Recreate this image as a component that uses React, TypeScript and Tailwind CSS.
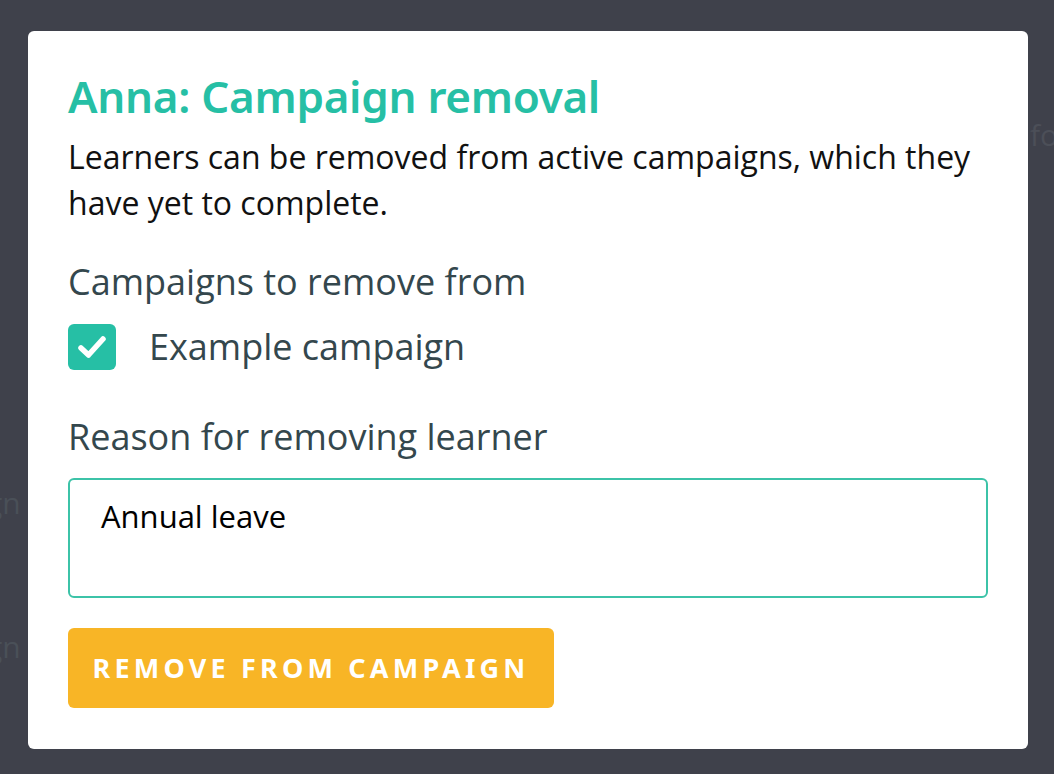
import React from "react";

export default function App() {
  return (
    <div className="relative w-[1054px] h-[774px] bg-[#3f414b] overflow-hidden" style={{ fontFamily: '"Open Sans", sans-serif' }}>
      <span className="absolute left-[1030px] top-[112px] text-[30px] text-[#4c4f58]">fo</span>
      <span className="absolute left-[-14px] top-[480px] text-[30px] text-[#4a5058]">gn</span>
      <span className="absolute left-[-14px] top-[624px] text-[30px] text-[#4a5058]">gn</span>
      <div className="relative flex pl-[28px] pt-[31px]">
        <div className="w-[1000px] h-[718px] bg-white rounded-[6px] px-[40px] pt-[40px] flex flex-col items-start">
          <h1 className="text-[44px] leading-[50px] font-semibold text-[#26bfa5] tracking-[-0.3px]" style={{ fontFamily: '"Noto Sans", sans-serif' }}>
            Anna: Campaign removal
          </h1>
          <p className="mt-[13px] text-[32px] leading-[46px] text-[#111]">
            Learners can be removed from active campaigns, which they have yet to complete.
          </p>
          <div className="mt-[34px] text-[36px] leading-[44px] text-[#34474d]">Campaigns to remove from</div>
          <div className="mt-[20px] flex items-center gap-[33px]">
            <div className="w-[48px] h-[46px] rounded-[6px] bg-[#26bfa5] flex items-center justify-center">
              <svg width="32" height="28" viewBox="0 0 32 28" fill="none">
                <path d="M5 15 L12.5 22 L27 6" stroke="white" strokeWidth="5.5" strokeLinecap="round" strokeLinejoin="round" />
              </svg>
            </div>
            <span className="text-[36px] leading-[44px] text-[#34474d]">Example campaign</span>
          </div>
          <div className="mt-[45px] text-[36px] leading-[44px] text-[#34474d]">Reason for removing learner</div>
          <div className="mt-[19px] self-stretch h-[120px] border-2 border-[#3cc3a8] rounded-[6px] px-[31px] pt-[16px] text-[31px] leading-[40px] text-black">
            Annual leave
          </div>
          <button className="mt-[30px] h-[80px] w-[486px] rounded-[6px] bg-[#f8b526] text-white font-bold text-[27px] tracking-[4.2px]" style={{ fontFamily: '"Noto Sans", sans-serif' }}>
            REMOVE FROM CAMPAIGN
          </button>
        </div>
      </div>
    </div>
  );
}
